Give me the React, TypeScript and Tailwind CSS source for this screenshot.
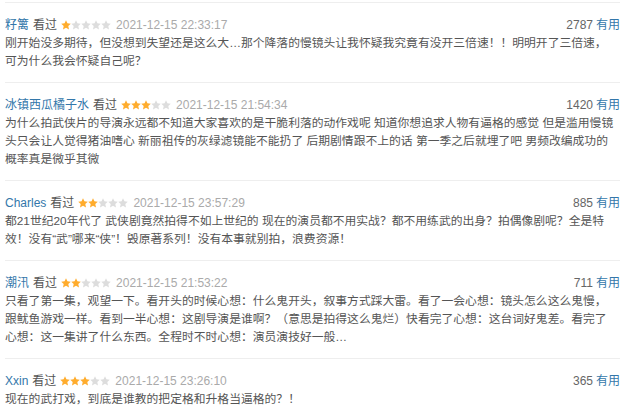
const reviews = [
  {
    name: '籽篱',
    rating: 1,
    time: '2021-12-15 22:33:17',
    votes: 2787,
    text: '刚开始没多期待，但没想到失望还是这么大…那个降落的慢镜头让我怀疑我究竟有没开三倍速！！明明开了三倍速，可为什么我会怀疑自己呢？',
  },
  {
    name: '冰镇西瓜橘子水',
    rating: 3,
    time: '2021-12-15 21:54:34',
    votes: 1420,
    text: '为什么拍武侠片的导演永远都不知道大家喜欢的是干脆利落的动作戏呢 知道你想追求人物有逼格的感觉 但是滥用慢镜头只会让人觉得猪油嗜心 新丽祖传的灰绿滤镜能不能扔了 后期剧情跟不上的话 第一季之后就埋了吧 男频改编成功的概率真是微乎其微',
  },
  {
    name: 'Charles',
    rating: 2,
    time: '2021-12-15 23:57:29',
    votes: 885,
    text: '都21世纪20年代了 武侠剧竟然拍得不如上世纪的 现在的演员都不用实战？都不用练武的出身？拍偶像剧呢？全是特效！没有“武”哪来“侠”！毁原著系列！没有本事就别拍，浪费资源！',
  },
  {
    name: '潮汛',
    rating: 2,
    time: '2021-12-15 21:53:22',
    votes: 711,
    text: '只看了第一集，观望一下。看开头的时候心想：什么鬼开头，叙事方式踩大雷。看了一会心想：镜头怎么这么鬼慢，跟鱿鱼游戏一样。看到一半心想：这剧导演是谁啊？（意思是拍得这么鬼烂）快看完了心想：这台词好鬼差。看完了心想：这一集讲了什么东西。全程时不时心想：演员演技好一般…',
  },
  {
    name: 'Xxin',
    rating: 3,
    time: '2021-12-15 23:26:10',
    votes: 365,
    text: '现在的武打戏，到底是谁教的把定格和升格当逼格的？！',
  },
];

function Star({ on }: { on: boolean }) {
  return (
    <svg width="10" height="10" viewBox="0 0 24 24" className="block">
      <polygon
        points="12,0.5 15.4,7.8 23.5,8.7 17.5,14.2 19.2,22.5 12,18.4 4.8,22.5 6.5,14.2 0.5,8.7 8.6,7.8"
        fill={on ? '#ffac2d' : '#dddddd'}
      />
    </svg>
  );
}

function Stars({ value }: { value: number }) {
  return (
    <span className="flex ml-[4px]">
      {[1, 2, 3, 4, 5].map((i) => (
        <Star key={i} on={i <= value} />
      ))}
    </span>
  );
}

export default function App() {
  return (
    <div className="w-[641px] h-[414px] overflow-hidden bg-white pt-[2px] pl-[5px] font-['Liberation_Sans','Noto_Sans_CJK_SC',sans-serif]">
      <div className="w-[615px]">
        {reviews.map((r) => (
          <div key={r.name} className="border-t border-[#eeeeee] pt-[13px] pb-[12px]">
            {/* 头部：用户名 / 评分 / 时间 / 有用 */}
            <div className="flex items-center justify-between h-[18px] leading-[18px] text-[12px]">
              <div className="flex items-center">
                <span className="text-[#3377aa]">{r.name}</span>
                <span className="ml-[4px] text-[#555]">看过</span>
                <Stars value={r.rating} />
                <span className="ml-[5px] text-[#aaa]">{r.time}</span>
              </div>
              <div>
                <span className="text-[#666]">{r.votes}</span>
                <span className="ml-[3px] text-[#3377aa]">有用</span>
              </div>
            </div>
            <p className="w-[610px] text-[11.8px] leading-[18px] text-[#555]">{r.text}</p>
          </div>
        ))}
      </div>
    </div>
  );
}
